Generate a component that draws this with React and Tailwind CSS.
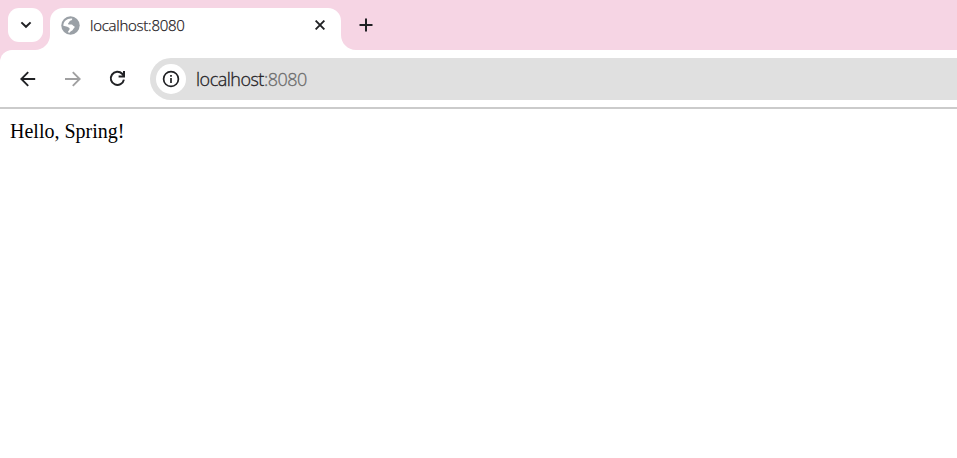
import React from "react";

function Flare({ className, d }) {
  return (
    <svg className={className} width="15" height="15" viewBox="0 0 15 15" fill="#fff">
      <path d={d} />
    </svg>
  );
}

function Globe() {
  return (
    <svg width="19" height="19" viewBox="0 0 19 19" fill="none">
      <circle cx="9.5" cy="9.5" r="9.2" fill="#9aa0a6" />
      <path
        d="M11.2 2.6C11.6 4.3 10 4.6 8.9 5C8 5.4 8.4 6.5 7.4 7.1C6.8 7.6 7 8.4 7.6 8.5H10.4C11.9 8.6 12 10.2 13.6 10.6C14 12 12.4 12.4 12 13.4C11.3 14.9 9.3 14.8 8.6 16.7L6.9 16.2C7.2 14.9 8.5 14.2 8.7 12.8C8.4 11.4 7.2 11.7 6.3 10.8L2.3 9.8C2.4 5.2 6.4 2 11.2 2.6Z"
        fill="#fff"
      />
    </svg>
  );
}

function Tab() {
  return (
    <div className="relative ml-[7px] mt-2 flex h-[42px] w-[291px] items-start rounded-t-[13px] bg-white pl-[11px]">
      <Flare className="absolute -left-[15px] bottom-0" d="M15 0V15H0C8.3 15 15 8.3 15 0Z" />
      <Flare className="absolute -right-[15px] bottom-0" d="M0 0V15H15C6.7 15 0 8.3 0 0Z" />
      <div className="mt-2">
        <Globe />
      </div>
      <span className="ml-[10px] mt-[7px] w-[200px] font-['Open_Sans','Noto_Sans',sans-serif] text-[15px] font-light leading-5 tracking-[-0.25px] text-[#1f2024] [-webkit-text-stroke:0.25px_#1f2024]">
        localhost:8080
      </span>
      <svg className="ml-[25px] mt-[12px]" width="10" height="10" viewBox="0 0 10 10" fill="none" stroke="#202124" strokeWidth="1.9">
        <path d="M0.6 0.6L9.4 9.4M9.4 0.6L0.6 9.4" />
      </svg>
    </div>
  );
}

export default function App() {
  return (
    <div className="h-[458px] w-full overflow-hidden bg-white">
      <header className="bg-[#f6d5e4]">
        <div className="flex h-[50px] pl-2">
          <button className="mt-2 flex h-[34px] w-[35px] items-center justify-center rounded-[11px] bg-white">
            <svg width="12" height="8" viewBox="0 0 12 8" fill="none" stroke="#202124" strokeWidth="2">
              <path d="M1.4 1.4L6 5.8L10.6 1.4" />
            </svg>
          </button>
          <Tab />
          <svg className="ml-[18px] mt-[18px]" width="14" height="14" viewBox="0 0 14 14" fill="none" stroke="#202124" strokeWidth="2">
            <path d="M7 0.5V13.5M0.5 7H13.5" />
          </svg>
        </div>
        <div className="flex h-[59px] items-start rounded-tl-[12px] border-b-2 border-[#cbcbcb] bg-white pt-2">
          <div className="flex h-[42px] w-[150px] items-center pb-px pl-5">
            <svg width="16" height="16" viewBox="0 0 16 16" fill="none" stroke="#202124" strokeWidth="1.9">
              <path d="M15.2 8H1.6M8.2 1.1L1.3 8L8.2 14.9" />
            </svg>
            <svg className="ml-[29px]" width="16" height="16" viewBox="0 0 16 16" fill="none" stroke="#a0a0a1" strokeWidth="1.9">
              <path d="M0 8H14.4M7.8 1.1L14.7 8L7.8 14.9" />
            </svg>
            <svg className="ml-[28px]" width="17" height="17" viewBox="0 0 17 17" fill="none" stroke="#202124" strokeWidth="2">
              <path d="M14.9 9.6A6.6 6.6 0 1 1 13.2 3.8L15 6" />
              <path d="M15 1V6.4H9.6" />
            </svg>
          </div>
          <div className="flex h-[42px] flex-1 items-center rounded-l-full bg-[#e0e0e0] pl-[6px]">
            <div className="flex h-[30px] w-[30px] items-center justify-center rounded-full bg-white">
              <svg width="18" height="18" viewBox="0 0 18 18" fill="none" stroke="#202124" strokeWidth="1.7">
                <circle cx="9" cy="9" r="7.4" />
                <path d="M9 8V13M9 5V6.8" />
              </svg>
            </div>
            <span className="ml-[10px] font-['Open_Sans','Noto_Sans',sans-serif] text-[18px] font-light leading-6 tracking-[-0.5px] text-[#1f2024] [-webkit-text-stroke:0.3px_currentColor]">
              localhost<span className="text-[#6b6b6b]">:8080</span>
            </span>
          </div>
        </div>
      </header>
      <main className="pl-[10px] pt-[11px] font-['Liberation_Serif','Times_New_Roman',serif] text-[20px] leading-[23px] text-black">
        Hello, Spring!
      </main>
    </div>
  );
}
